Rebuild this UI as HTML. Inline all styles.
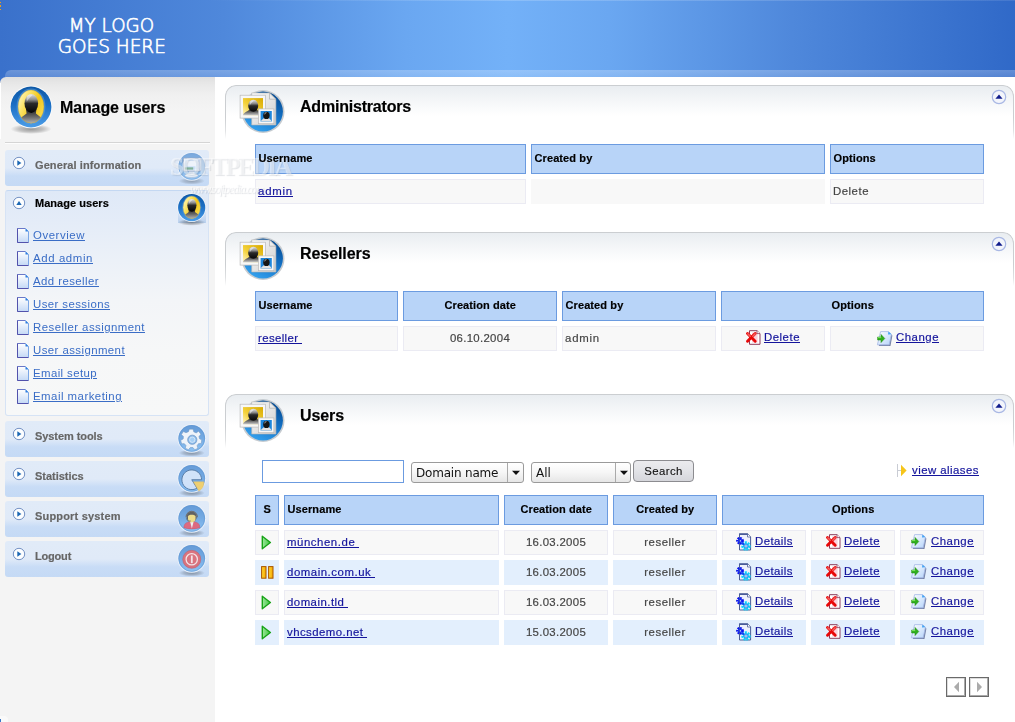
<!DOCTYPE html>
<html lang="en"><head><meta charset="utf-8"><title>Manage users</title>
<style>
html,body{margin:0;padding:0;}
body{-webkit-text-stroke:.18px currentColor;width:1015px;height:722px;position:relative;overflow:hidden;background:#fff;font-family:"Liberation Sans",sans-serif;font-size:12px;color:#444;}
.abs,.t,.c,.h,.mi,svg.i{position:absolute;}
.t{white-space:pre;line-height:1;display:block;}
a{color:#14149c;text-decoration:underline;}
#hdr{left:0;top:0;width:1015px;height:77px;background:linear-gradient(90deg,#3a71cb 0%,#4f88db 22%,#6aa7f1 40%,#73b1f8 50%,#6aa7f1 60%,#4f88db 78%,#3069c8 100%);}
#hdr2{left:5px;top:70px;width:1010px;height:7px;background:linear-gradient(180deg,rgba(255,255,255,.25),rgba(255,255,255,.17));border-radius:6px 0 0 0;}
#side{left:0;top:77px;width:215px;height:645px;background:linear-gradient(180deg,#e0e0e0 0,#e9e9e9 8px,#f0f0f0 18px,#f4f4f4 34px,#f4f4f4 100%);border-radius:6px 0 0 0;}
#sideedge{display:none;}
.b{font-weight:bold;}
.ttl{font-weight:bold;color:#000;}
.mi{left:5px;width:204px;height:36px;border-radius:3px;background:linear-gradient(180deg,#e1ebf8 0,#e0eaf8 50%,#c8dcf6 72%,#c5daf5 100%);}
.mt{font-weight:bold;color:#666;}
.sub{color:#3a6dc6;-webkit-text-stroke:0;}
.panel{left:225px;width:789px;height:54px;box-sizing:border-box;border:1px solid #cbced1;border-bottom:0;border-radius:11px 11px 0 0;background:linear-gradient(180deg,#e9edf1 0,#f4f6f8 14px,#fff 30px);
 -webkit-mask-image:linear-gradient(180deg,#000 0,#000 60%,rgba(0,0,0,.6) 85%,transparent 100%);mask-image:linear-gradient(180deg,#000 0,#000 60%,rgba(0,0,0,.6) 85%,transparent 100%);}
.h{box-sizing:border-box;height:30px;background:#b8d4f8;border:1px solid #6b9be0;color:#000;font-weight:bold;font-size:11px;line-height:26px;padding:0 2px 0 2.5px;white-space:pre;letter-spacing:.1px;}
.c{font-size:11.4px;box-sizing:border-box;height:25px;background:#f8f8f8;border:1px solid #ebebf3;line-height:23px;padding:0 2px;white-space:pre;color:#444;}
.c.e{background:#e3effd;border-color:#e3effd;}
.ctr{text-align:center;}
.sel{-webkit-text-stroke:0;box-sizing:border-box;height:21px;border:1px solid #9a9a9a;border-radius:3px;background:linear-gradient(180deg,#fff 0,#f6f6f6 50%,#e6e6e6 100%);font-family:"DejaVu Sans",sans-serif;font-size:12px;color:#111;}
.btn{-webkit-text-stroke:.12px currentColor;box-sizing:border-box;border:1px solid #8c8c90;border-radius:4px;background:linear-gradient(180deg,#ebebee 0,#e2e3e7 50%,#d5d6db 100%);color:#111;}
.pg{box-sizing:border-box;width:20px;height:20px;border:1px solid #6a6a6a;background:#fff;box-shadow:inset -1px -1px 0 #aaa, inset 1px 1px 0 #ddd;}

.h>span,.c>span,.c>a{position:relative;z-index:2;}
.c.nb{border-color:#f8f8f8;}
.t,.h>span,.c>span,.c>a{will-change:transform;}

</style></head>
<body>
<svg width="0" height="0" style="position:absolute" aria-hidden="true">
<defs>
<linearGradient id="gBlue" x1="0" y1="0" x2="0" y2="1"><stop offset="0" stop-color="#0d58a6"/><stop offset=".45" stop-color="#1c6fc4"/><stop offset="1" stop-color="#4b9de8"/></linearGradient>
<linearGradient id="gBlue2" x1=".8" y1="0" x2=".3" y2="1"><stop offset="0" stop-color="#06498f"/><stop offset=".5" stop-color="#1473c8"/><stop offset="1" stop-color="#35a2ee"/></linearGradient>
<linearGradient id="gYel" x1="0" y1="0" x2="1" y2=".6"><stop offset="0" stop-color="#fffbe0"/><stop offset=".35" stop-color="#fbe46a"/><stop offset=".7" stop-color="#f3c617"/><stop offset="1" stop-color="#f7d84a"/></linearGradient><linearGradient id="gYel2" x1="0" y1="1" x2="1" y2="0"><stop offset="0" stop-color="#fff6c8"/><stop offset=".4" stop-color="#f4d23c"/><stop offset="1" stop-color="#d8a900"/></linearGradient>
<linearGradient id="gHead" x1="0" y1="0" x2="0" y2="1"><stop offset="0" stop-color="#e4e4e4"/><stop offset=".3" stop-color="#8e8e8e"/><stop offset=".5" stop-color="#2a2a2a"/><stop offset="1" stop-color="#050505"/></linearGradient>
<linearGradient id="gBody" x1="0" y1="0" x2="0" y2="1"><stop offset="0" stop-color="#1e1e1e"/><stop offset=".5" stop-color="#6a6a6a"/><stop offset="1" stop-color="#c8c8c8"/></linearGradient>
<radialGradient id="gShadow"><stop offset="0" stop-color="#000" stop-opacity=".38"/><stop offset=".6" stop-color="#000" stop-opacity=".2"/><stop offset="1" stop-color="#000" stop-opacity="0"/></radialGradient>
<linearGradient id="gPage" x1="0" y1="0" x2="1" y2="1"><stop offset="0" stop-color="#fafafa"/><stop offset="1" stop-color="#cfcfcf"/></linearGradient>
<linearGradient id="gDoc" x1="0" y1="0" x2="0" y2="1"><stop offset="0" stop-color="#ffffff"/><stop offset="1" stop-color="#c4d9f6"/></linearGradient>
<linearGradient id="gSph" x1="0" y1="0" x2="0" y2="1"><stop offset="0" stop-color="#4f8dd2"/><stop offset=".5" stop-color="#62a0e0"/><stop offset="1" stop-color="#86c0f4"/></linearGradient>
<linearGradient id="gGreen" x1="0" y1="0" x2="1" y2="0"><stop offset="0" stop-color="#9be89b"/><stop offset="1" stop-color="#3fc43f"/></linearGradient>
<linearGradient id="gPause" x1="0" y1="0" x2="1" y2="0"><stop offset="0" stop-color="#ffd633"/><stop offset="1" stop-color="#f5a800"/></linearGradient>
<linearGradient id="gChg" x1="0" y1="0" x2="1" y2="1"><stop offset="0" stop-color="#ffffff"/><stop offset="1" stop-color="#b6d4fa"/></linearGradient>
<clipPath id="cpY"><ellipse cx="22" cy="21.6" rx="12.9" ry="16.6"/></clipPath>

<!-- user sphere, center (22,22) r 20.6 -->
<symbol id="usr" viewBox="0 0 44 50">
 <ellipse cx="22" cy="44" rx="20.5" ry="5" fill="url(#gShadow)"/>
 <circle cx="22" cy="22" r="21.3" fill="#fbfbfb"/>
 <circle cx="22" cy="22" r="20.4" fill="url(#gBlue)"/>
 <ellipse cx="22" cy="21.6" rx="14.4" ry="18" fill="#5c9fde" fill-opacity=".55"/>
 <ellipse cx="22" cy="21.6" rx="12.9" ry="16.6" fill="url(#gYel)"/>
 <g clip-path="url(#cpY)">
  <path d="M8 40 C9 33.5 14 31.5 17.6 28.6 L17 24 L27.4 24 L26.9 28.6 C30.5 31.5 35 33.5 36 40 Z" fill="url(#gBody)"/>
  <ellipse cx="22.3" cy="18.4" rx="6.8" ry="9.5" fill="url(#gHead)"/>
  <path d="M17.6 13 C18 9.5 21 9 23.6 10.2 C21 12.5 19 14 17.8 17 Z" fill="#fff" fill-opacity=".45"/>
 </g>
 <ellipse cx="22" cy="21.6" rx="12.9" ry="16.6" fill="none" stroke="#c89c10" stroke-opacity=".5" stroke-width=".6"/>
</symbol>

<!-- panel icon, circle center (25,25) r 20.8, viewBox 50 -->
<symbol id="pic" viewBox="0 0 50 50">
 <circle cx="25" cy="25.5" r="21.5" fill="#c6cbd0"/>
 <circle cx="25" cy="25.5" r="19.9" fill="url(#gBlue2)"/>
 <path d="M13.7 6.9 H31.5 L37.9 13.2 V39 H13.7 Z" fill="url(#gPage)" stroke="#b4b4b4" stroke-width=".6"/>
 <path d="M31.5 6.9 V13.2 H37.9 Z" fill="#ececec" stroke="#a4a4a4" stroke-width=".6"/>
 <rect x="2.1" y="9.2" width="25.4" height="22.9" fill="#f7f7f7" stroke="#b8b8b8" stroke-width=".7"/>
 <rect x="5" y="12.1" width="20" height="17.1" fill="url(#gYel2)"/>
 <path d="M5 29.2 C6 26 10 25.4 12.4 23 L18.6 23 C20 25.6 24 26.4 25 29.2 Z" fill="url(#gBody)"/>
 <ellipse cx="15.2" cy="19.8" rx="5" ry="6" fill="url(#gHead)"/>
 <path d="M11.6 17 C12 14.4 14 14 16 14.8 C14 16.4 12.6 17.6 11.8 19.6 Z" fill="#fff" fill-opacity=".5"/>
 <rect x="20.4" y="22.9" width="15.5" height="14.8" fill="#f7f7f7" stroke="#b8b8b8" stroke-width=".7"/>
 <rect x="22.6" y="25" width="11.2" height="10.6" fill="#1d86dc"/>
 <path d="M22.6 35.6 C24 33 26 32.8 27 31 L30 31 C31 32.8 32.5 33 33.8 35.6 Z" fill="#e2e2e2"/>
 <ellipse cx="28.4" cy="29.4" rx="3.2" ry="3.7" fill="#161616"/>
 <path d="M26.4 27.6 C26.8 26.2 28 26 29 26.4 C27.8 27.2 27 28 26.6 29 Z" fill="#fff" fill-opacity=".5"/>
</symbol>

<!-- small sphere base r13 center (15,14) viewBox 30x34 -->
<symbol id="sph" viewBox="0 0 30 34">
 <ellipse cx="15" cy="27.6" rx="12.5" ry="3.4" fill="url(#gShadow)"/>
 <circle cx="15" cy="13.7" r="13.6" fill="#eef3fa"/>
 <circle cx="15" cy="13.7" r="12.7" fill="url(#gSph)"/>
 <circle cx="15" cy="13.7" r="12.3" fill="none" stroke="#4a86c8" stroke-opacity=".55" stroke-width=".9"/>
</symbol>
<symbol id="iGen" viewBox="0 0 30 34">
 <use href="#sph"/>
 <path d="M12.5 18 H17 L18 21.6 H11.5 Z" fill="#dfe6ee"/>
 <ellipse cx="14.7" cy="22.3" rx="6.4" ry="2" fill="#f4f7fa" stroke="#8fa4c0" stroke-width=".5"/>
 <rect x="7" y="5.8" width="16.9" height="12.4" rx="1" fill="#f2f6fb" stroke="#7189ad" stroke-width=".8"/>
 <rect x="8.4" y="7.2" width="12" height="9.6" fill="#c4dcf7"/>
 <rect x="8.4" y="14.6" width="8" height="2.2" fill="#5a9a72"/>
 <rect x="10.4" y="8.4" width="8.4" height="5.2" fill="#f4f8fd"/>
 <rect x="20.6" y="7" width="2.6" height="10" fill="#b9c9e4"/>
</symbol>
<symbol id="iGear" viewBox="0 0 30 34">
 <use href="#sph"/>
 <g transform="translate(14.5,14.5)">
  <g fill="#f2f6fb" stroke="#5b87b8" stroke-width=".5">
   <path d="M-1.8 -9.6 H1.8 L2.4 -7 L4.7 -6 L7 -7.6 L9.2 -4.8 L7.4 -2.6 L7.9 -.4 L10 .6 L9.6 4 L6.9 4.2 L5.6 6.2 L6.4 8.7 L3.4 10 L1.6 7.9 L-.9 8 L-2.6 10 L-5.7 8.6 L-5 6 L-6.6 4.2 L-9.2 4.4 L-10 1 L-7.7 -.2 L-7.4 -2.6 L-9.4 -4.4 L-7.4 -7.3 L-5 -6.2 L-2.6 -7.2 Z"/>
  </g>
  <circle cx="1" cy=".5" r="4.4" fill="#7db3e8" stroke="#4d7db4" stroke-width=".6"/>
  <circle cx="1" cy=".5" r="2.6" fill="#9ccbf5" stroke="#e8f1fb" stroke-width=".7"/>
 </g>
</symbol>
<symbol id="iPie" viewBox="0 0 30 34">
 <use href="#sph"/>
 <path d="M15 15 H24.4 A9.4 9.4 0 1 0 20 23 Z" fill="#cfe2fa" stroke="#3f6896" stroke-width=".9" transform="rotate(0 15 15)"/>
 <path d="M16.6 17 H26.5 A9.5 9.5 0 0 1 21.8 25.8 Z" fill="#f4cd5a" stroke="#e0b040" stroke-width=".4"/>
</symbol>
<symbol id="iSup" viewBox="0 0 30 34">
 <use href="#sph"/>
 <path d="M7.4 22.6 C7.6 18.6 9.8 17.6 12.6 16.8 L17.6 16.8 C20.4 17.6 22.6 18.6 22.8 22.6 C18 24.2 12 24.2 7.4 22.6 Z" fill="#e0566c" stroke="#b83a52" stroke-width=".4"/>
 <path d="M13.5 16.8 L15.1 23.4 L16.7 16.8 Z" fill="#f3f3f3"/>
 <ellipse cx="15" cy="12.2" rx="4.8" ry="5" fill="#4a4a4a"/>
 <path d="M11.4 12 C11.4 9.8 18.6 9.8 18.6 12 V14.4 C18.6 18.6 11.4 18.6 11.4 14.4 Z" fill="#f0da78"/>
 <path d="M9.6 12.6 A5.4 5.6 0 0 1 20.4 12.6" fill="none" stroke="#5a5a5a" stroke-width="1"/>
 <path d="M10.2 13 C10 16 12 16.4 14 16.2" fill="none" stroke="#444" stroke-width=".7"/>
</symbol>
<symbol id="iOut" viewBox="0 0 30 34">
 <use href="#sph"/>
 <circle cx="15" cy="14.6" r="8.6" fill="#d9606a"/>
 <circle cx="15" cy="14.6" r="8.6" fill="none" stroke="#c0444e" stroke-width=".5"/>
 <circle cx="15" cy="14.6" r="5.4" fill="none" stroke="#f7e4e6" stroke-width="1.2"/>
 <rect x="14.2" y="11" width="1.7" height="7.2" fill="#f7e4e6"/>
</symbol>

<!-- sidebar round toggle 14x14 -->
<symbol id="tgR" viewBox="0 0 14 14"><circle cx="7" cy="7" r="5.7" fill="#fdfeff" stroke="#7391c4" stroke-width="1"/><path d="M5.3 4.3 L9.4 7 L5.3 9.7 Z" fill="#1c68b4"/></symbol>
<symbol id="tgU" viewBox="0 0 14 14"><circle cx="7" cy="7" r="5.7" fill="#fdfeff" stroke="#7391c4" stroke-width="1"/><path d="M4.3 8.9 L7 5 L9.7 8.9 Z" fill="#1c68b4"/></symbol>
<!-- panel collapse 16x16 -->
<symbol id="col" viewBox="0 0 18 18"><circle cx="9" cy="9" r="6.7" fill="#f3f5fb" stroke="#a9b8e4" stroke-width="1.2"/><path d="M5.4 10.8 L9 6.6 L12.6 10.8 Z" fill="#101c8c"/></symbol>

<!-- doc 12x15 -->
<symbol id="doc" viewBox="0 0 12 15">
 <path d="M.5 .5 H8.5 L11.5 3.5 V14.5 H.5 Z" fill="url(#gDoc)"/>
 <path d="M.5 14.5 V.5 H8.5" fill="none" stroke="#6a78c8" stroke-width="1"/>
 <path d="M8.5 .5 L11.5 3.5 V14.5" fill="none" stroke="#7aa6e6" stroke-width="1"/>
 <path d="M.5 .5 V14.5 H11.5" fill="none" stroke="#5252ac" stroke-width="1"/>
 <path d="M8.5 .5 V3.5 H11.5 Z" fill="#2f7fe0"/>
</symbol>

<!-- delete 16x16 -->
<symbol id="del" viewBox="0 0 16 16">
 <path d="M4.5 1.7 H12 L15 4.6 V15.3 H4.5 Z" fill="#fff" stroke="#8c3c5c" stroke-width="1"/>
 <path d="M7 3.5 H12.6 V13.6 H7 Z" fill="#fbd0dc"/>
 <path d="M12 1.7 V4.6 H15" fill="#fff" stroke="#8c3c5c" stroke-width=".8"/>
 <path d="M2.5 4.5 L10.2 12.2 M10.2 4.5 L2.5 12.2" stroke="#e80808" stroke-width="2.9" stroke-linecap="round"/>
 <path d="M2.9 4.9 L5.2 7.2 M10.1 4.9 L7.8 7.2" stroke="#f99" stroke-opacity=".6" stroke-width="1.5" stroke-linecap="round"/>
</symbol>
<!-- details 16x18 -->
<symbol id="det" viewBox="0 0 16 18">
 <path d="M3.5 1 H11.8 L14.6 3.8 V17 H3.5 Z" fill="#eef0fc" stroke="#4a5c98" stroke-width="1"/>
 <rect x="3" y=".4" width="9" height="1.6" fill="#4a5c98"/>
 <path d="M11.5 1 V4 H14.6" fill="#fff" stroke="#4a5c98" stroke-width=".8"/>
 <circle cx="4" cy="7.8" r="2.7" fill="none" stroke="#0a10ea" stroke-width="2.4" stroke-dasharray="1.6 .9"/>
 <circle cx="4" cy="7.8" r="1.6" fill="none" stroke="#1a30f0" stroke-width="1.4"/>
 <circle cx="10" cy="13" r="3.4" fill="none" stroke="#08d8fc" stroke-width="2.6" stroke-dasharray="1.9 1"/>
 <circle cx="10" cy="13" r="2.2" fill="#a8b8f0" stroke="#18a8f0" stroke-width="1.2"/>
 <path d="M5.4 9.4 L8 11.6" stroke="#1040f0" stroke-width="2"/>
</symbol>
<!-- change 17x16 -->
<symbol id="chg" viewBox="0 0 17 16">
 <path d="M5 2 H12.6 L15.6 4.6 L13.6 15.4 H2 Z" fill="#5f6d96" opacity=".85" transform="translate(.8,.8)"/>
 <path d="M4.6 1.6 H12.4 L15.4 4.2 L13.2 14.8 H1.4 Z" fill="url(#gChg)" stroke="#a4b8e6" stroke-width=".8"/>
 <path d="M12.4 1.6 L12 4.4 L15.4 4.2 Z" fill="#48a4f4"/>
 <path d="M1.6 7 H5 V4.4 L8.8 8.5 L5 12.6 V10 H1.6 Z" fill="#2fae1c" stroke="#1f8a10" stroke-width=".5"/>
 <path d="M2 7.6 H5.2" stroke="#8af06a" stroke-width=".9"/>
</symbol>
<symbol id="play" viewBox="0 0 11 15"><path d="M1.3 1.2 L9.4 7.5 L1.3 13.8 Z" fill="url(#gGreen)" stroke="#17a317" stroke-width="1.4" stroke-linejoin="round"/></symbol>
<symbol id="pause" viewBox="0 0 13 13"><rect x=".6" y=".6" width="4.4" height="11.6" fill="url(#gPause)" stroke="#a85400" stroke-width="1"/><rect x="7.6" y=".6" width="4.4" height="11.6" fill="url(#gPause)" stroke="#a85400" stroke-width="1"/></symbol>
<symbol id="ali" viewBox="0 0 12 13"><path d="M1.5 0 V13" stroke="#c9ccd4" stroke-width="1"/><path d="M1.5 6.5 H5" stroke="#c9ccd4" stroke-width="1"/><path d="M5 .8 L10.6 6.5 L5 12.2 Z" fill="#f6c51a"/></symbol>
</defs>
</svg>
<div id="hdr" class="abs"></div><div id="hdr2" class="abs"></div><div class="abs" style="left:0;top:0;width:1015px;height:1px;background:linear-gradient(90deg,rgba(255,255,255,0) 20%,rgba(255,255,255,.18) 50%,rgba(255,255,255,.1) 100%)"></div><div class="abs" style="left:0;top:2px;width:1px;height:1px;background:#e8a020"></div><div class="abs" style="left:0;top:5px;width:1px;height:2px;background:#e8a020"></div><div class="abs" style="left:0;top:9px;width:1px;height:1px;background:#e8a020"></div>
<svg class="i" style="left:50px;top:10px" width="125" height="50"><g font-family="DejaVu Sans Light, DejaVu Sans, sans-serif" font-size="19" fill="#fff" stroke="#fff" stroke-width=".65"><text x="68.8" y="31.6" transform="translate(-50,-10)" textLength="85.4" lengthAdjust="spacingAndGlyphs">MY LOGO</text><text x="57.8" y="52.6" transform="translate(-50,-10)" textLength="108" lengthAdjust="spacingAndGlyphs">GOES HERE</text></g></svg>
<div class="abs" style="left:0;top:77px;width:8px;height:7px;background:#3b72cb"></div><div id="side" class="abs"></div><div class="abs" style="left:0;top:83px;width:1px;height:56px;background:#fff"></div>
<svg class="i" style="left:8.9px;top:84.7px;" width="44" height="50"><use href="#usr"/></svg><span class="t ttl" style="left:60px;top:100px;font-size:16px;letter-spacing:-0.127px;">Manage users</span><div class="abs" style="left:5px;top:142px;width:205px;height:1px;background:#d5d5d5"></div><div class="abs" style="left:5px;top:143px;width:205px;height:1px;background:#fdfdfd"></div>
<div class="mi" style="top:150px"></div><svg class="i" style="left:11.9px;top:156.2px;" width="14" height="14"><use href="#tgR"/></svg><span class="t mt" style="left:34.6px;top:160px;font-size:11px;letter-spacing:0.1px;">General information</span>
<svg class="i" style="left:176.1px;top:152.4px;opacity:.7" width="31.5" height="35.7"><use href="#iGen"/></svg><div class="mi" style="top:190px;height:226px;box-sizing:border-box;border:1px solid #d6e3f5;border-top-color:#c4d8f2;background:linear-gradient(180deg,#dfe9f7 0,#e4ecf8 30px,#ecf1f8 70px,#f3f5f8 110px,#f6f7f8 160px,#f7f8f8 100%)"></div><svg class="i" style="left:11.9px;top:196.2px;" width="14" height="14"><use href="#tgU"/></svg><span class="t mt" style="left:34.6px;top:198px;font-size:11px;color:#000;letter-spacing:0.04px;">Manage users</span>
<div class="abs" style="left:178px;top:208px;width:28px;height:15px;background:linear-gradient(180deg,rgba(160,190,230,0),rgba(150,185,230,.55))"></div><svg class="i" style="left:177.3px;top:192.6px;" width="29.4" height="33.4"><use href="#usr"/></svg><svg class="i" style="left:17px;top:228px;" width="12" height="15"><use href="#doc"/></svg><span class="t " style="left:33px;top:230px;font-size:11.4px;letter-spacing:0.564px;"><a class="sub" href="#">Overview</a></span>
<svg class="i" style="left:17px;top:251px;" width="12" height="15"><use href="#doc"/></svg><span class="t " style="left:33px;top:253px;font-size:11.4px;letter-spacing:0.615px;"><a class="sub" href="#">Add admin</a></span>
<svg class="i" style="left:17px;top:274px;" width="12" height="15"><use href="#doc"/></svg><span class="t " style="left:33px;top:276px;font-size:11.4px;letter-spacing:0.435px;"><a class="sub" href="#">Add reseller</a></span>
<svg class="i" style="left:17px;top:297px;" width="12" height="15"><use href="#doc"/></svg><span class="t " style="left:33px;top:299px;font-size:11.4px;letter-spacing:0.421px;"><a class="sub" href="#">User sessions</a></span>
<svg class="i" style="left:17px;top:320px;" width="12" height="15"><use href="#doc"/></svg><span class="t " style="left:33px;top:322px;font-size:11.4px;letter-spacing:0.463px;"><a class="sub" href="#">Reseller assignment</a></span>
<svg class="i" style="left:17px;top:343px;" width="12" height="15"><use href="#doc"/></svg><span class="t " style="left:33px;top:345px;font-size:11.4px;letter-spacing:0.435px;"><a class="sub" href="#">User assignment</a></span>
<svg class="i" style="left:17px;top:366px;" width="12" height="15"><use href="#doc"/></svg><span class="t " style="left:33px;top:368px;font-size:11.4px;letter-spacing:0.408px;"><a class="sub" href="#">Email setup</a></span>
<svg class="i" style="left:17px;top:389px;" width="12" height="15"><use href="#doc"/></svg><span class="t " style="left:33px;top:391px;font-size:11.4px;letter-spacing:0.489px;"><a class="sub" href="#">Email marketing</a></span>
<div class="mi" style="top:421px"></div><svg class="i" style="left:11.9px;top:427.2px;" width="14" height="14"><use href="#tgR"/></svg><span class="t mt" style="left:34.6px;top:431px;font-size:11px;letter-spacing:-0.07px;">System tools</span>
<svg class="i" style="left:176.25px;top:423.6px;opacity:.85" width="31.5" height="35.7"><use href="#iGear"/></svg>
<div class="mi" style="top:461px"></div><svg class="i" style="left:11.9px;top:467.2px;" width="14" height="14"><use href="#tgR"/></svg><span class="t mt" style="left:34.6px;top:471px;font-size:11px;letter-spacing:-0.02px;">Statistics</span>
<svg class="i" style="left:176.25px;top:463.6px;opacity:.85" width="31.5" height="35.7"><use href="#iPie"/></svg>
<div class="mi" style="top:501px"></div><svg class="i" style="left:11.9px;top:507.2px;" width="14" height="14"><use href="#tgR"/></svg><span class="t mt" style="left:34.6px;top:511px;font-size:11px;letter-spacing:0.18px;">Support system</span>
<svg class="i" style="left:176.25px;top:503.6px;opacity:.85" width="31.5" height="35.7"><use href="#iSup"/></svg>
<div class="mi" style="top:541px"></div><svg class="i" style="left:11.9px;top:547.2px;" width="14" height="14"><use href="#tgR"/></svg><span class="t mt" style="left:34.6px;top:551px;font-size:11px;letter-spacing:-0.19px;">Logout</span>
<svg class="i" style="left:176.25px;top:543.6px;opacity:.85" width="31.5" height="35.7"><use href="#iOut"/></svg>
<div class="abs panel" style="top:85px"></div><svg class="i" style="left:238.3px;top:86.1px;" width="50" height="50"><use href="#pic"/></svg><span class="t ttl" style="left:300px;top:99px;font-size:16px;letter-spacing:-0.200px;">Administrators</span><svg class="i" style="left:989.5px;top:88.2px;" width="18" height="18"><use href="#col"/></svg>
<div class="h" style="left:255px;top:144px;width:271px"><span>Username</span></div><div class="h" style="left:531px;top:144px;width:294px"><span>Created by</span></div><div class="h" style="left:830px;top:144px;width:154px"><span>Options</span></div>
<div class="c " style="left:255px;top:179px;width:271px"><a href="#" style="letter-spacing:0.794px">admin</a></div><div class="c nb" style="left:531px;top:179px;width:294px"></div><div class="c " style="left:830px;top:179px;width:154px"><span style="letter-spacing:0.510px">Delete</span></div>
<div class="abs panel" style="top:232px"></div><svg class="i" style="left:238.3px;top:233.1px;" width="50" height="50"><use href="#pic"/></svg><span class="t ttl" style="left:300px;top:246px;font-size:16px;letter-spacing:-0.075px;">Resellers</span><svg class="i" style="left:989.5px;top:235.2px;" width="18" height="18"><use href="#col"/></svg>
<div class="h" style="left:255px;top:291px;width:143px"><span>Username</span></div><div class="h ctr" style="left:403px;top:291px;width:154px"><span>Creation date</span></div><div class="h" style="left:562px;top:291px;width:154px"><span>Created by</span></div><div class="h ctr" style="left:721px;top:291px;width:263px"><span>Options</span></div>
<div class="c " style="left:255px;top:326px;width:143px"><a href="#" style="letter-spacing:0.387px">reseller </a></div><div class="c ctr" style="left:403px;top:326px;width:154px"><span style="letter-spacing:0.305px">06.10.2004</span></div><div class="c " style="left:562px;top:326px;width:154px"><span style="letter-spacing:0.794px">admin</span></div><div class="c " style="left:721px;top:326px;width:104px"></div><div class="c " style="left:830px;top:326px;width:154px"></div><svg class="i" style="left:745.3px;top:329px;" width="16" height="16"><use href="#del"/></svg><span class="t " style="left:764.4px;top:332px;font-size:11.4px;letter-spacing:0.510px;"><a href="#">Delete</a></span><svg class="i" style="left:876px;top:329.5px;" width="17" height="16"><use href="#chg"/></svg><span class="t " style="left:896.2px;top:332px;font-size:11.4px;letter-spacing:0.516px;"><a href="#">Change</a></span>
<div class="abs panel" style="top:394px"></div><svg class="i" style="left:238.3px;top:395.1px;" width="50" height="50"><use href="#pic"/></svg><span class="t ttl" style="left:300px;top:408px;font-size:16px;letter-spacing:-0.097px;">Users</span><svg class="i" style="left:989.5px;top:397.2px;" width="18" height="18"><use href="#col"/></svg>
<div class="abs" style="left:262px;top:460px;width:142px;height:23px;box-sizing:border-box;border:1px solid #6b9be0;background:#fff"></div><div class="abs sel" style="left:411px;top:462px;width:113px"><span class="t" style="left:3.8px;top:4.3px;font-size:12px;letter-spacing:-.2px">Domain name</span><span class="abs" style="left:95px;top:0;width:1px;height:19px;background:#aaa"></span><svg class="i" style="left:99px;top:6.5px" width="10" height="6"><path d="M1 .8 H9 L5 5 Z" fill="#111"/></svg></div><div class="abs sel" style="left:531px;top:462px;width:100px"><span class="t" style="left:3.8px;top:4.3px;font-size:12px">All</span><span class="abs" style="left:83px;top:0;width:1px;height:19px;background:#aaa"></span><svg class="i" style="left:87px;top:6.5px" width="10" height="6"><path d="M1 .8 H9 L5 5 Z" fill="#111"/></svg></div><div class="abs btn" style="left:633px;top:460px;width:61px;height:22px"><span class="t" style="left:0;top:5.4px;width:59px;text-align:center;font-size:11.4px;letter-spacing:0.401px">Search</span></div><svg class="i" style="left:896px;top:464px;" width="12" height="13"><use href="#ali"/></svg><span class="t " style="left:912px;top:465px;font-size:11.4px;letter-spacing:0.465px;"><a href="#">view aliases</a></span>
<div class="h ctr" style="left:255px;top:495px;width:24px"><span>S</span></div><div class="h" style="left:284px;top:495px;width:215px"><span>Username</span></div><div class="h ctr" style="left:504px;top:495px;width:104px"><span>Creation date</span></div><div class="h ctr" style="left:613px;top:495px;width:104px"><span>Created by</span></div><div class="h ctr" style="left:722px;top:495px;width:262px"><span>Options</span></div>
<div class="c " style="left:255px;top:530px;width:24px"></div><div class="c " style="left:284px;top:530px;width:215px"><a href="#" style="letter-spacing:0.558px">münchen.de </a></div><div class="c ctr " style="left:504px;top:530px;width:104px"><span style="letter-spacing:0.305px">16.03.2005</span></div><div class="c ctr " style="left:613px;top:530px;width:104px"><span style="letter-spacing:0.518px">reseller</span></div><div class="c " style="left:722px;top:530px;width:84px"></div><div class="c " style="left:811px;top:530px;width:84px"></div><div class="c " style="left:900px;top:530px;width:84px"></div><svg class="i" style="left:261.3px;top:534.5px;" width="11" height="15"><use href="#play"/></svg><svg class="i" style="left:736px;top:532.7px;" width="16" height="18"><use href="#det"/></svg><span class="t " style="left:755.2px;top:536px;font-size:11.4px;letter-spacing:0.453px;"><a href="#">Details</a></span><svg class="i" style="left:824.6px;top:533px;" width="16" height="16"><use href="#del"/></svg><span class="t " style="left:844.1px;top:536px;font-size:11.4px;letter-spacing:0.510px;"><a href="#">Delete</a></span><svg class="i" style="left:910.2px;top:533.4px;" width="17" height="16"><use href="#chg"/></svg><span class="t " style="left:931px;top:536px;font-size:11.4px;letter-spacing:0.516px;"><a href="#">Change</a></span>
<div class="c e" style="left:255px;top:560px;width:24px"></div><div class="c e" style="left:284px;top:560px;width:215px"><a href="#" style="letter-spacing:0.542px">domain.com.uk </a></div><div class="c ctr e" style="left:504px;top:560px;width:104px"><span style="letter-spacing:0.305px">16.03.2005</span></div><div class="c ctr e" style="left:613px;top:560px;width:104px"><span style="letter-spacing:0.518px">reseller</span></div><div class="c e" style="left:722px;top:560px;width:84px"></div><div class="c e" style="left:811px;top:560px;width:84px"></div><div class="c e" style="left:900px;top:560px;width:84px"></div><svg class="i" style="left:260.6px;top:565.7px;" width="13" height="13"><use href="#pause"/></svg><svg class="i" style="left:736px;top:562.7px;" width="16" height="18"><use href="#det"/></svg><span class="t " style="left:755.2px;top:566px;font-size:11.4px;letter-spacing:0.453px;"><a href="#">Details</a></span><svg class="i" style="left:824.6px;top:563px;" width="16" height="16"><use href="#del"/></svg><span class="t " style="left:844.1px;top:566px;font-size:11.4px;letter-spacing:0.510px;"><a href="#">Delete</a></span><svg class="i" style="left:910.2px;top:563.4px;" width="17" height="16"><use href="#chg"/></svg><span class="t " style="left:931px;top:566px;font-size:11.4px;letter-spacing:0.516px;"><a href="#">Change</a></span>
<div class="c " style="left:255px;top:590px;width:24px"></div><div class="c " style="left:284px;top:590px;width:215px"><a href="#" style="letter-spacing:0.480px">domain.tld </a></div><div class="c ctr " style="left:504px;top:590px;width:104px"><span style="letter-spacing:0.305px">16.03.2005</span></div><div class="c ctr " style="left:613px;top:590px;width:104px"><span style="letter-spacing:0.518px">reseller</span></div><div class="c " style="left:722px;top:590px;width:84px"></div><div class="c " style="left:811px;top:590px;width:84px"></div><div class="c " style="left:900px;top:590px;width:84px"></div><svg class="i" style="left:261.3px;top:594.5px;" width="11" height="15"><use href="#play"/></svg><svg class="i" style="left:736px;top:592.7px;" width="16" height="18"><use href="#det"/></svg><span class="t " style="left:755.2px;top:596px;font-size:11.4px;letter-spacing:0.453px;"><a href="#">Details</a></span><svg class="i" style="left:824.6px;top:593px;" width="16" height="16"><use href="#del"/></svg><span class="t " style="left:844.1px;top:596px;font-size:11.4px;letter-spacing:0.510px;"><a href="#">Delete</a></span><svg class="i" style="left:910.2px;top:593.4px;" width="17" height="16"><use href="#chg"/></svg><span class="t " style="left:931px;top:596px;font-size:11.4px;letter-spacing:0.516px;"><a href="#">Change</a></span>
<div class="c e" style="left:255px;top:620px;width:24px"></div><div class="c e" style="left:284px;top:620px;width:215px"><a href="#" style="letter-spacing:0.456px">vhcsdemo.net </a></div><div class="c ctr e" style="left:504px;top:620px;width:104px"><span style="letter-spacing:0.305px">15.03.2005</span></div><div class="c ctr e" style="left:613px;top:620px;width:104px"><span style="letter-spacing:0.518px">reseller</span></div><div class="c e" style="left:722px;top:620px;width:84px"></div><div class="c e" style="left:811px;top:620px;width:84px"></div><div class="c e" style="left:900px;top:620px;width:84px"></div><svg class="i" style="left:261.3px;top:624.5px;" width="11" height="15"><use href="#play"/></svg><svg class="i" style="left:736px;top:622.7px;" width="16" height="18"><use href="#det"/></svg><span class="t " style="left:755.2px;top:626px;font-size:11.4px;letter-spacing:0.453px;"><a href="#">Details</a></span><svg class="i" style="left:824.6px;top:623px;" width="16" height="16"><use href="#del"/></svg><span class="t " style="left:844.1px;top:626px;font-size:11.4px;letter-spacing:0.510px;"><a href="#">Delete</a></span><svg class="i" style="left:910.2px;top:623.4px;" width="17" height="16"><use href="#chg"/></svg><span class="t " style="left:931px;top:626px;font-size:11.4px;letter-spacing:0.516px;"><a href="#">Change</a></span>
<div class="abs pg" style="left:946px;top:677px"><svg class="i" style="left:6px;top:2.5px" width="7" height="12"><path d="M6 .8 L1 6 L6 11.2 Z" fill="#ababab"/></svg></div><div class="abs pg" style="left:969px;top:677px"><svg class="i" style="left:6px;top:2.5px" width="7" height="12"><path d="M1 .8 L6 6 L1 11.2 Z" fill="#ababab"/></svg></div><span class="t" style="z-index:1;left:169.5px;top:153.5px;font-size:25px;font-weight:bold;font-family:&quot;Liberation Serif&quot;,serif;color:rgba(255,255,255,.45);text-shadow:1px 1px 1px rgba(90,100,120,.17);letter-spacing:-2.566px">SOFTPEDIA</span><span class="t" style="z-index:1;left:190px;top:184px;font-size:11.5px;font-family:&quot;Liberation Serif&quot;,serif;font-style:italic;color:rgba(255,255,255,.5);text-shadow:1px 1px 1px rgba(90,100,120,.2);letter-spacing:-0.955px">www.softpedia.com</span>
<div class="abs" style="left:0;top:716px;width:8px;height:6px;background:rgba(255,255,255,.55);border-radius:0 4px 0 0"></div><div class="abs" style="left:0;top:719px;width:1px;height:3px;background:#3a78c8"></div>

</body></html>
